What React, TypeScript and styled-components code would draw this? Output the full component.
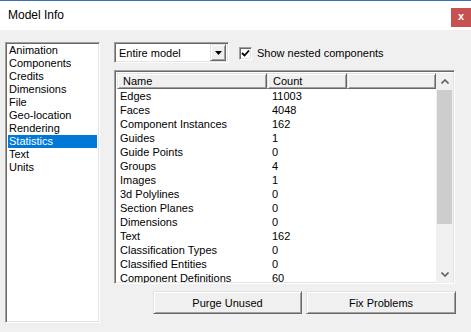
import React from "react";
import styled, { createGlobalStyle, css } from "styled-components";

const Global = createGlobalStyle`
  html, body { margin: 0; padding: 0; background: #f0f0f0; }
  body { font-family: "Liberation Sans", Arial, sans-serif; font-size: 11px; color: #000; }
  * { box-sizing: border-box; }
`;

const sunken = css`
  border-top: 1px solid #a0a0a0;
  border-left: 1px solid #a0a0a0;
  border-bottom: 1px solid #ffffff;
  border-right: 1px solid #ffffff;
  box-shadow: inset 1px 1px 0 #696969, inset -1px -1px 0 #e3e3e3;
`;

const raised = css`
  border-top: 1px solid #e3e3e3;
  border-left: 1px solid #e3e3e3;
  border-bottom: 1px solid #696969;
  border-right: 1px solid #696969;
  box-shadow: inset 1px 1px 0 #ffffff, inset -1px -1px 0 #a0a0a0;
`;

const Window = styled.div`
  width: 471px;
  height: 332px;
  background: #f0f0f0;
  display: flex;
  flex-direction: column;
  overflow: hidden;
`;

const TitleBar = styled.div`
  height: 30px;
  flex: none;
  background: #ffffff;
  border-top: 1px solid #3c6db4;
  display: flex;
  align-items: center;
  padding-left: 8px;
`;

const Title = styled.div`
  flex: 1;
  font-size: 12px;
  margin-top: -1px;
`;

const CloseButton = styled.div`
  align-self: flex-start;
  margin-top: 7px;
  width: 20px;
  height: 19px;
  background: #c75050;
  color: #fff;
  font-weight: bold;
  font-size: 11px;
  display: flex;
  align-items: center;
  justify-content: center;
  line-height: 1;
  padding-bottom: 2px;
`;

const Body = styled.div`
  display: flex;
  gap: 14px;
  padding: 12px 0 0 5px;
`;

const SideList = styled.div`
  ${sunken};
  background: #fff;
  width: 95px;
  height: 281px;
  padding: 1px 2px 0 2px;
  display: flex;
  flex-direction: column;
`;

const SideItem = styled.div<{ $selected?: boolean }>`
  height: 13px;
  line-height: 13px;
  padding-left: 1px;
  white-space: nowrap;
  background: ${(p) => (p.$selected ? "#0078d7" : "transparent")};
  color: ${(p) => (p.$selected ? "#fff" : "#000")};
`;

const Main = styled.div`
  width: 342px;
  display: flex;
  flex-direction: column;
`;

const TopRow = styled.div`
  display: flex;
  align-items: center;
  height: 21px;
  gap: 10px;
`;

const Combo = styled.div`
  ${sunken};
  background: #fff;
  width: 115px;
  height: 21px;
  display: flex;
  align-items: center;
  padding: 2px;
`;

const ComboText = styled.div`
  flex: 1;
  padding-left: 2px;
`;

const ComboButton = styled.div`
  ${raised};
  background: #f0f0f0;
  width: 16px;
  height: 17px;
  display: flex;
  align-items: center;
  justify-content: center;
`;

const CheckLabel = styled.label`
  display: flex;
  align-items: center;
  gap: 5px;
  margin-top: 1px;
`;

const CheckBox = styled.div`
  ${sunken};
  background: #fff;
  width: 13px;
  height: 13px;
  display: flex;
  align-items: center;
  justify-content: center;
`;

const ListView = styled.div`
  ${sunken};
  background: #fff;
  margin-top: 7px;
  width: 341px;
  height: 214px;
  padding: 2px 0 0 2px;
  display: flex;
  overflow: hidden;
`;

const ListArea = styled.div`
  flex: 1;
  display: flex;
  flex-direction: column;
  overflow: hidden;
`;

const HeaderRow = styled.div`
  display: flex;
  height: 16px;
  flex: none;
`;

const HeaderCell = styled.div<{ $w?: number }>`
  ${raised};
  background: #f0f0f0;
  height: 16px;
  line-height: 14px;
  padding-left: 5px;
  ${(p) => (p.$w ? `width: ${p.$w}px;` : "flex: 1;")}
`;

const Row = styled.div`
  display: flex;
  height: 14px;
  line-height: 14px;
  flex: none;
  white-space: nowrap;
`;

const Cell = styled.div<{ $w: number }>`
  width: ${(p) => p.$w}px;
  padding-left: 3px;
`;

const ScrollBar = styled.div`
  width: 17px;
  flex: none;
  background: #f0f0f0;
  display: flex;
  flex-direction: column;
  margin-right: 1px;
`;

const ScrollArrow = styled.div`
  height: 17px;
  display: flex;
  align-items: center;
  justify-content: center;
  flex: none;
`;

const Thumb = styled.div`
  height: 134px;
  margin: 0 1px;
  background: #cdcdcd;
  flex: none;
`;

const Track = styled.div`
  flex: 1;
`;

const ButtonRow = styled.div`
  display: flex;
  gap: 4px;
  margin-top: 7px;
  padding-left: 39px;
`;

const Button = styled.div<{ $w: number }>`
  ${raised};
  background: #f0f0f0;
  width: ${(p) => p.$w}px;
  height: 23px;
  display: flex;
  align-items: center;
  justify-content: center;
`;

const sideItems = [
  "Animation",
  "Components",
  "Credits",
  "Dimensions",
  "File",
  "Geo-location",
  "Rendering",
  "Statistics",
  "Text",
  "Units",
];

const stats: [string, string][] = [
  ["Edges", "11003"],
  ["Faces", "4048"],
  ["Component Instances", "162"],
  ["Guides", "1"],
  ["Guide Points", "0"],
  ["Groups", "4"],
  ["Images", "1"],
  ["3d Polylines", "0"],
  ["Section Planes", "0"],
  ["Dimensions", "0"],
  ["Text", "162"],
  ["Classification Types", "0"],
  ["Classified Entities", "0"],
  ["Component Definitions", "60"],
];

export default function App() {
  return (
    <>
      <Global />
      <Window>
        <TitleBar>
          <Title>Model Info</Title>
          <CloseButton>x</CloseButton>
        </TitleBar>
        <Body>
          <SideList>
            {sideItems.map((s) => (
              <SideItem key={s} $selected={s === "Statistics"}>
                {s}
              </SideItem>
            ))}
          </SideList>
          <Main>
            <TopRow>
              <Combo>
                <ComboText>Entire model</ComboText>
                <ComboButton>
                  <svg width="7" height="4" viewBox="0 0 7 4">
                    <polygon points="0,0 7,0 3.5,4" fill="#000" />
                  </svg>
                </ComboButton>
              </Combo>
              <CheckLabel>
                <CheckBox>
                  <svg width="9" height="9" viewBox="0 0 9 9">
                    <polyline points="1,4 3.5,6.5 8,1.5" fill="none" stroke="#000" strokeWidth="1.8" />
                  </svg>
                </CheckBox>
                Show nested components
              </CheckLabel>
            </TopRow>
            <ListView>
              <ListArea>
                <HeaderRow>
                  <HeaderCell $w={150}>Name</HeaderCell>
                  <HeaderCell $w={80}>Count</HeaderCell>
                  <HeaderCell />
                </HeaderRow>
                {stats.map(([n, c]) => (
                  <Row key={n}>
                    <Cell $w={152}>{n}</Cell>
                    <Cell $w={80}>{c}</Cell>
                  </Row>
                ))}
              </ListArea>
              <ScrollBar>
                <ScrollArrow>
                  <svg width="8" height="5" viewBox="0 0 8 5">
                    <polyline points="0.5,4.5 4,1 7.5,4.5" fill="none" stroke="#606060" strokeWidth="1.6" />
                  </svg>
                </ScrollArrow>
                <Thumb />
                <Track />
                <ScrollArrow>
                  <svg width="8" height="5" viewBox="0 0 8 5">
                    <polyline points="0.5,0.5 4,4 7.5,0.5" fill="none" stroke="#606060" strokeWidth="1.6" />
                  </svg>
                </ScrollArrow>
              </ScrollBar>
            </ListView>
            <ButtonRow>
              <Button $w={149}>Purge Unused</Button>
              <Button $w={150}>Fix Problems</Button>
            </ButtonRow>
          </Main>
        </Body>
      </Window>
    </>
  );
}
